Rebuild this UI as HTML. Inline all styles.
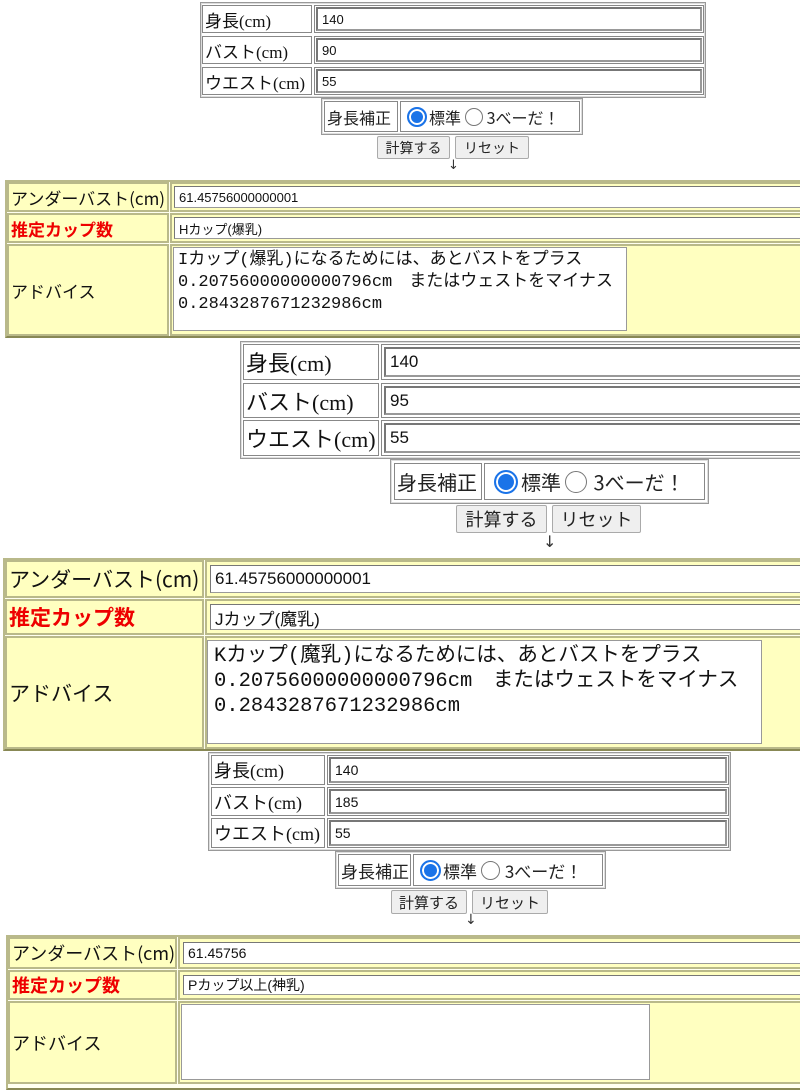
<!DOCTYPE html>
<html><head><meta charset="utf-8"><style>
body{margin:0;width:800px;height:1086px;background:#fff;position:relative;overflow:hidden;font-family:"Liberation Sans","Noto Sans CJK JP",sans-serif}
div{position:absolute;box-sizing:border-box}
.ot{border:1px solid #999;box-shadow:inset 0 0 0 1px #ddd}
.c{border:1px solid #888;background:#fff;font-family:"Liberation Serif","Noto Sans CJK JP",serif;white-space:nowrap;display:flex;align-items:center;padding-left:2px;color:#111}
.in{border:2px solid #999;border-top-color:#777;border-left-color:#777;background:#fff;display:flex;align-items:center;padding-left:4px;white-space:nowrap;color:#111;font-family:"Liberation Sans","Noto Sans CJK JP",sans-serif}
.bt{background:#efefef;border:1px solid #aaa;border-radius:2px;display:flex;align-items:center;justify-content:center;font-family:"Noto Sans CJK JP",sans-serif;color:#222}
.rt{border:2px solid #b9b98a;border-bottom-color:#888855;border-right-color:#888855;background:#fffff0}
.y{border:2px solid #b9b98a;background:#ffffc0;display:flex;align-items:center;padding-left:2px;white-space:nowrap;font-family:"Noto Sans CJK JP",sans-serif;color:#111}
.y.h{color:#e00;font-weight:bold}
.ta{border:1px solid #999;background:#fff;font-family:"Liberation Mono","Noto Sans CJK JP",monospace;white-space:pre;color:#111;padding:2px 4px}
.rad{border-radius:50%;border:1px solid #777;background:#fff}
.rad.on{border:2px solid #1a73e8;box-shadow:inset 0 0 0 2px #fff;background:#1a73e8}
.ar{font-family:"DejaVu Sans",sans-serif;color:#333}
.rc{border:1px solid #888;background:#fff;display:flex;align-items:center;white-space:nowrap;font-family:"Noto Sans CJK JP",sans-serif;color:#222}
</style></head><body>

<!-- Block 1 -->
<div class="ot" style="left:200px;top:2px;width:506px;height:96px"></div>
<div class="c" style="left:202px;top:5px;width:110px;height:28px;font-size:17px">身長(cm)</div>
<div class="c" style="left:202px;top:36px;width:110px;height:28px;font-size:17px">バスト(cm)</div>
<div class="c" style="left:202px;top:67px;width:110px;height:28px;font-size:17px">ウエスト(cm)</div>
<div class="c" style="left:314px;top:5px;width:390px;height:28px;padding:1px"><div class="in" style="position:relative;width:100%;height:100%;font-size:13px">140</div></div>
<div class="c" style="left:314px;top:36px;width:390px;height:28px;padding:1px"><div class="in" style="position:relative;width:100%;height:100%;font-size:13px">90</div></div>
<div class="c" style="left:314px;top:67px;width:390px;height:28px;padding:1px"><div class="in" style="position:relative;width:100%;height:100%;font-size:13px">55</div></div>
<div class="ot" style="left:321px;top:98px;width:262px;height:37px"></div>
<div class="rc" style="left:324px;top:101px;width:74px;height:31px;font-size:16px;padding-left:2px">身長補正</div>
<div class="rc" style="left:400px;top:101px;width:180px;height:31px;font-size:16px;padding-left:6px"><span class="rad on" style="display:inline-block;width:16px;height:16px;margin-right:2px"></span>標準&nbsp;<span class="rad" style="display:inline-block;width:16px;height:16px;margin-right:4px"></span>3べーだ！</div>
<div class="bt" style="left:377px;top:136px;width:73px;height:23px;font-size:14px">計算する</div>
<div class="bt" style="left:455px;top:136px;width:74px;height:23px;font-size:14px">リセット</div>
<div class="ar" style="left:448px;top:158px;font-size:13px">↓</div>
<div class="rt" style="left:5px;top:180px;width:800px;height:158px"></div>
<div class="y" style="left:7px;top:182px;width:162px;height:30px;font-size:17px">アンダーバスト(cm)</div>
<div class="y h" style="left:7px;top:213px;width:162px;height:30px;font-size:17px">推定カップ数</div>
<div class="y" style="left:7px;top:244px;width:162px;height:92px;font-size:17px">アドバイス</div>
<div class="y" style="left:170px;top:182px;width:640px;height:30px;padding:2px"><div class="in" style="position:relative;width:100%;height:100%;font-size:13px;border-width:1px">61.45756000000001</div></div>
<div class="y" style="left:170px;top:213px;width:640px;height:30px;padding:2px"><div class="in" style="position:relative;width:100%;height:100%;font-size:13px;border-width:1px">Hカップ(爆乳)</div></div>
<div class="y" style="left:170px;top:244px;width:640px;height:92px"></div>
<div class="ta" style="left:173px;top:247px;width:454px;height:84px;font-size:17px;line-height:22px">Iカップ(爆乳)になるためには、あとバストをプラス
0.20756000000000796cm　またはウェストをマイナス
0.2843287671232986cm</div>

<!-- Block 2 -->
<div class="ot" style="left:240px;top:341px;width:570px;height:118px"></div>
<div class="c" style="left:243px;top:344px;width:136px;height:36px;font-size:22px">身長(cm)</div>
<div class="c" style="left:243px;top:383px;width:136px;height:35px;font-size:22px">バスト(cm)</div>
<div class="c" style="left:243px;top:420px;width:136px;height:36px;font-size:22px">ウエスト(cm)</div>
<div class="c" style="left:381px;top:344px;width:430px;height:36px;padding:2px"><div class="in" style="position:relative;width:100%;height:100%;font-size:17px">140</div></div>
<div class="c" style="left:381px;top:383px;width:430px;height:35px;padding:2px"><div class="in" style="position:relative;width:100%;height:100%;font-size:17px">95</div></div>
<div class="c" style="left:381px;top:420px;width:430px;height:36px;padding:2px"><div class="in" style="position:relative;width:100%;height:100%;font-size:17px">55</div></div>
<div class="ot" style="left:390px;top:459px;width:319px;height:45px"></div>
<div class="rc" style="left:394px;top:463px;width:88px;height:37px;font-size:20px;padding-left:2px">身長補正</div>
<div class="rc" style="left:484px;top:463px;width:221px;height:37px;font-size:20px;padding-left:9px"><span class="rad on" style="display:inline-block;width:20px;height:20px;margin-right:3px"></span>標準&nbsp;<span class="rad" style="display:inline-block;width:20px;height:20px;margin-right:6px"></span>3べーだ！</div>
<div class="bt" style="left:456px;top:505px;width:91px;height:28px;font-size:18px">計算する</div>
<div class="bt" style="left:552px;top:505px;width:89px;height:28px;font-size:18px">リセット</div>
<div class="ar" style="left:543px;top:532px;font-size:16px">↓</div>
<div class="rt" style="left:3px;top:558px;width:810px;height:193px"></div>
<div class="y" style="left:5px;top:560px;width:199px;height:38px;font-size:21px">アンダーバスト(cm)</div>
<div class="y h" style="left:5px;top:599px;width:199px;height:36px;font-size:21px">推定カップ数</div>
<div class="y" style="left:5px;top:636px;width:199px;height:113px;font-size:21px">アドバイス</div>
<div class="y" style="left:205px;top:560px;width:610px;height:38px;padding:3px"><div class="in" style="position:relative;width:100%;height:100%;font-size:17px;border-width:1px">61.45756000000001</div></div>
<div class="y" style="left:205px;top:599px;width:610px;height:36px;padding:3px"><div class="in" style="position:relative;width:100%;height:100%;font-size:17px;border-width:1px">Jカップ(魔乳)</div></div>
<div class="y" style="left:205px;top:636px;width:610px;height:113px"></div>
<div class="ta" style="left:207px;top:640px;width:555px;height:104px;font-size:20.5px;line-height:25px;padding:3px 6px">Kカップ(魔乳)になるためには、あとバストをプラス
0.20756000000000796cm　またはウェストをマイナス
0.2843287671232986cm</div>

<!-- Block 3 -->
<div class="ot" style="left:208px;top:752px;width:523px;height:99px"></div>
<div class="c" style="left:211px;top:755px;width:114px;height:30px;font-size:18px">身長(cm)</div>
<div class="c" style="left:211px;top:787px;width:114px;height:29px;font-size:18px">バスト(cm)</div>
<div class="c" style="left:211px;top:818px;width:114px;height:30px;font-size:18px">ウエスト(cm)</div>
<div class="c" style="left:327px;top:755px;width:402px;height:30px;padding:1px"><div class="in" style="position:relative;width:100%;height:100%;font-size:14px">140</div></div>
<div class="c" style="left:327px;top:787px;width:402px;height:29px;padding:1px"><div class="in" style="position:relative;width:100%;height:100%;font-size:14px">185</div></div>
<div class="c" style="left:327px;top:818px;width:402px;height:30px;padding:1px"><div class="in" style="position:relative;width:100%;height:100%;font-size:14px">55</div></div>
<div class="ot" style="left:335px;top:851px;width:271px;height:38px"></div>
<div class="rc" style="left:338px;top:854px;width:73px;height:32px;font-size:17px;padding-left:2px">身長補正</div>
<div class="rc" style="left:413px;top:854px;width:190px;height:32px;font-size:17px;padding-left:6px"><span class="rad on" style="display:inline-block;width:17px;height:17px;margin-right:2px"></span>標準&nbsp;<span class="rad" style="display:inline-block;width:17px;height:17px;margin-right:5px"></span>3べーだ！</div>
<div class="bt" style="left:391px;top:890px;width:76px;height:24px;font-size:15px">計算する</div>
<div class="bt" style="left:472px;top:890px;width:76px;height:24px;font-size:15px">リセット</div>
<div class="ar" style="left:465px;top:912px;font-size:14px">↓</div>
<div class="rt" style="left:6px;top:935px;width:810px;height:155px"></div>
<div class="y" style="left:8px;top:937px;width:169px;height:32px;font-size:18px">アンダーバスト(cm)</div>
<div class="y h" style="left:8px;top:970px;width:169px;height:30px;font-size:18px">推定カップ数</div>
<div class="y" style="left:8px;top:1001px;width:169px;height:83px;font-size:18px">アドバイス</div>
<div class="y" style="left:178px;top:937px;width:640px;height:32px;padding:3px"><div class="in" style="position:relative;width:100%;height:100%;font-size:14px;border-width:1px">61.45756</div></div>
<div class="y" style="left:178px;top:970px;width:640px;height:30px;padding:3px"><div class="in" style="position:relative;width:100%;height:100%;font-size:14px;border-width:1px">Pカップ以上(神乳)</div></div>
<div class="y" style="left:178px;top:1001px;width:640px;height:83px"></div>
<div class="ta" style="left:181px;top:1004px;width:469px;height:76px"></div>
</body></html>
